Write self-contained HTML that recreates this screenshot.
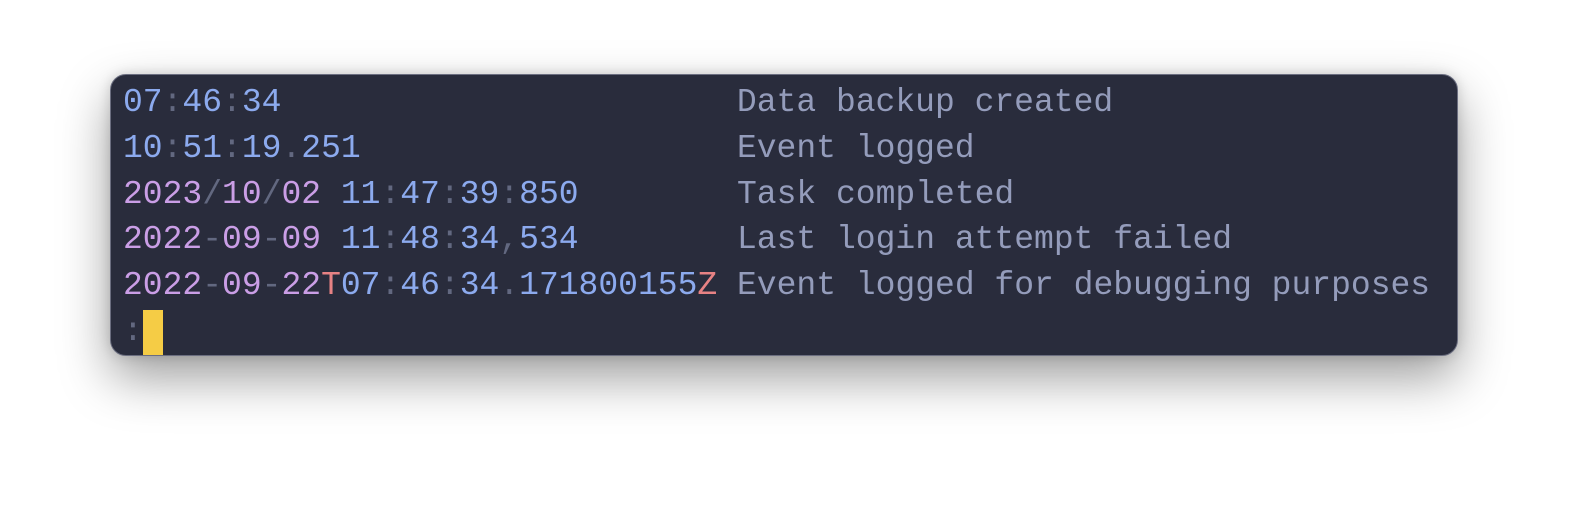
<!DOCTYPE html>
<html><head><style>
html,body{margin:0;padding:0;width:1584px;height:508px;background:#fff;overflow:hidden}
.win{position:absolute;left:110px;top:74px;width:1346px;height:280px;background:#292c3c;border:1px solid #6b6e80;border-radius:16px;box-shadow:0 22px 50px rgba(0,0,0,0.38),0 0 12px rgba(0,0,0,0.15)}
pre{position:absolute;left:12px;top:5px;margin:0;font-family:"Liberation Mono",monospace;font-size:33px;line-height:45.8px;color:#949cbb}
.b{color:#8caaee}.m{color:#ca9ee6}.g{color:#626880}.r{color:#e78284}
.cur{display:inline-block;width:20px;height:45px;background:#f5cc45;vertical-align:top;margin-top:1px}
</style></head><body>
<div class="win"><pre><span class="b">07</span><span class="g">:</span><span class="b">46</span><span class="g">:</span><span class="b">34</span>                       Data backup created
<span class="b">10</span><span class="g">:</span><span class="b">51</span><span class="g">:</span><span class="b">19</span><span class="g">.</span><span class="b">251</span>                   Event logged
<span class="m">2023</span><span class="g">/</span><span class="m">10</span><span class="g">/</span><span class="m">02</span> <span class="b">11</span><span class="g">:</span><span class="b">47</span><span class="g">:</span><span class="b">39</span><span class="g">:</span><span class="b">850</span>        Task completed
<span class="m">2022</span><span class="g">-</span><span class="m">09</span><span class="g">-</span><span class="m">09</span> <span class="b">11</span><span class="g">:</span><span class="b">48</span><span class="g">:</span><span class="b">34</span><span class="g">,</span><span class="b">534</span>        Last login attempt failed
<span class="m">2022</span><span class="g">-</span><span class="m">09</span><span class="g">-</span><span class="m">22</span><span class="r">T</span><span class="b">07</span><span class="g">:</span><span class="b">46</span><span class="g">:</span><span class="b">34</span><span class="g">.</span><span class="b">171800155</span><span class="r">Z</span> Event logged for debugging purposes
<span class="g">:</span><span class="cur"></span></pre></div>
</body></html>
